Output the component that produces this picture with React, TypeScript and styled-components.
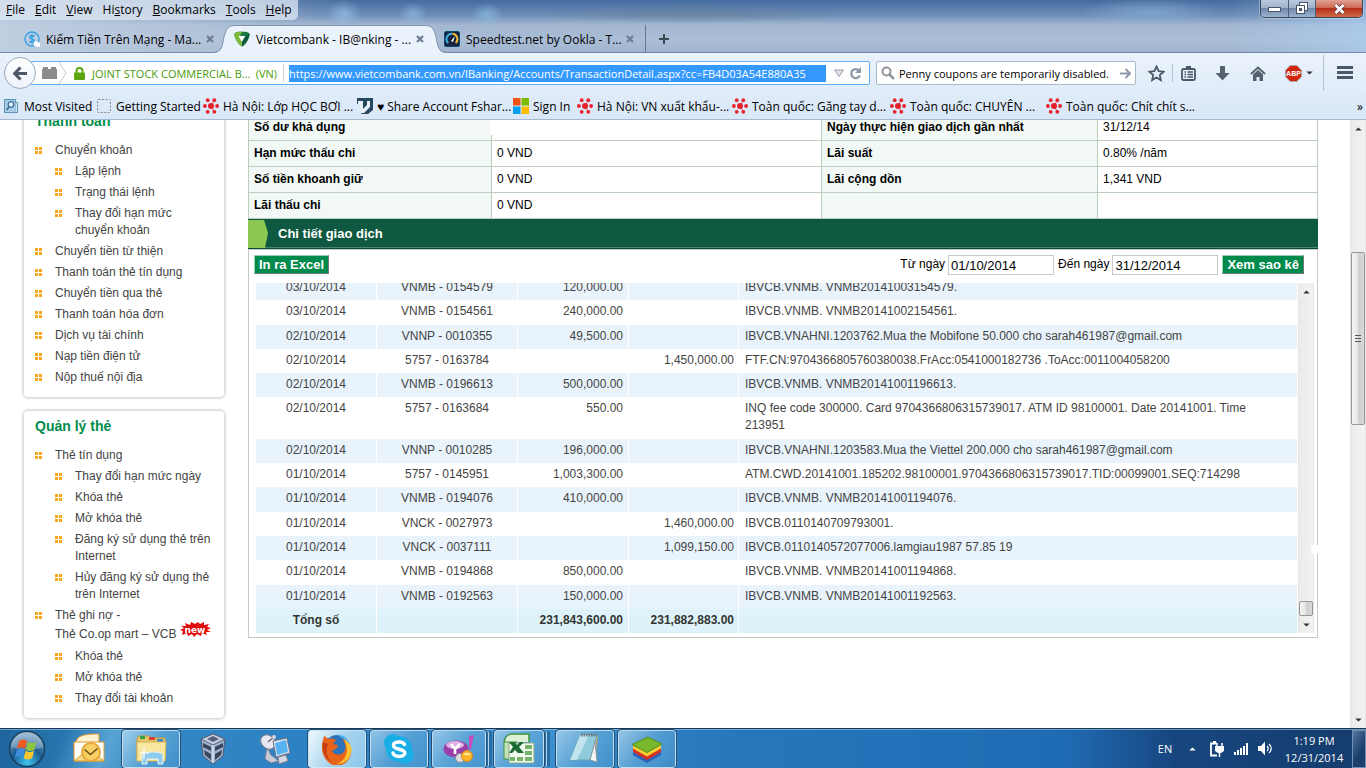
import React from "react";
import styled, { createGlobalStyle, css } from "styled-components";

const UI_FONT = '"Open Sans", "Noto Sans", sans-serif';
const PAGE_FONT = '"Liberation Sans", Arial, sans-serif';

const GlobalStyle = createGlobalStyle`
  * { box-sizing: border-box; }
  html, body { margin: 0; height: 100%; overflow: hidden; }
  body { font-family: ${PAGE_FONT}; font-size: 12px; background: #fff; }
  button, input { font: inherit; margin: 0; padding: 0; border: 0; background: none; color: inherit; }
  button { display: flex; align-items: center; justify-content: center; }
  a { color: inherit; text-decoration: none; }
  ul { list-style: none; margin: 0; padding: 0; }
  svg { display: block; flex: none; }
`;

/* ---------- Window ---------- */

const Desktop = styled.div`
  display: flex;
  flex-direction: column;
  height: 100vh;
`;

const BrowserChrome = styled.header`
  flex: none;
  font-family: ${UI_FONT};
  font-size: 12px;
  color: #000;
`;

const TitleArea = styled.div`
  height: 53px;
  display: flex;
  flex-direction: column;
  border-bottom: 1px solid #7288a8;
  background:
    radial-gradient(ellipse 18px 14px at 344px 14px, rgba(150, 195, 235, 0.7), transparent),
    radial-gradient(ellipse 14px 12px at 413px 14px, rgba(150, 195, 235, 0.6), transparent),
    radial-gradient(ellipse 16px 12px at 487px 15px, rgba(140, 190, 225, 0.7), transparent),
    radial-gradient(ellipse 160px 9px at 690px 14px, rgba(105, 125, 150, 0.6), transparent),
    radial-gradient(ellipse 70px 14px at 1150px 12px, rgba(140, 180, 220, 0.6), transparent),
    linear-gradient(90deg, rgba(195, 208, 226, 0.9), transparent 26%, transparent 90%, rgba(175, 210, 245, 0.6)),
    linear-gradient(#446c9f, #6d8db7 15px, #a3b7d1 25px, #a9bdd6 40px, #a0b4ce);
`;

const TitleRow = styled.div`
  display: flex;
  justify-content: space-between;
  align-items: flex-start;
  height: 25px;
`;

const MenuBar = styled.nav`
  display: flex;
  height: 20px;
  align-items: center;
  padding: 0 6px;
  gap: 10px;
  border-radius: 0 0 5px 0;
  background: rgba(222, 231, 243, 0.75);
`;

const MenuEntry = styled.button`
  line-height: 18px;
  u { text-underline-offset: 1px; }
`;

const WindowControls = styled.div`
  display: flex;
  height: 18px;
  margin-right: 3px;
  border: 1px solid #35465e;
  border-top: 0;
  border-radius: 0 0 5px 5px;
  overflow: hidden;
  box-shadow: 0 0 0 1px rgba(255, 255, 255, 0.3);
`;

const ControlButton = styled.button<{ $close?: boolean }>`
  width: ${(p) => (p.$close ? 47 : 27)}px;
  border-left: ${(p) => (p.$close ? "1px solid #5c2a2a" : "0")};
  background: ${(p) =>
    p.$close
      ? "linear-gradient(#e0a294, #cf6a53 45%, #b5301a 50%, #d06a45)"
      : "linear-gradient(#b9c8dc, #a0b3cc 45%, #7089ab 50%, #9db4d0)"};
  & + & { border-left: 1px solid #4a5d78; }
`;

const TabStrip = styled.div`
  display: flex;
  height: 27px;
  padding-left: 15px;
`;

const Tab = styled.div`
  position: relative;
  display: flex;
  align-items: center;
  width: 210px;
  height: 28px;
  padding: 0 10px 0 9px;
  gap: 6px;
`;

const TabShape = styled.svg`
  position: absolute;
  left: -13px;
  top: 0;
  width: 236px;
  height: 28px;
`;

const TabTitle = styled.button`
  position: relative;
  flex: 1;
  min-width: 0;
  justify-content: flex-start;
  white-space: nowrap;
`;

const TabIcon = styled.span`
  position: relative;
`;

const TabClose = styled.button`
  position: relative;
`;

const NewTab = styled.button`
  width: 36px;
  border-left: 1px solid #66778f;
`;

const NavBar = styled.div`
  display: flex;
  align-items: center;
  height: 40px;
  padding-left: 4px;
  background: linear-gradient(#eaf2fc, #e0ecf9);
  font-size: 11px;
`;

const BackButton = styled.button`
  position: relative;
  z-index: 1;
  flex: none;
  width: 32px;
  height: 32px;
  margin-right: -6px;
  border: 1px solid #9aa9bd;
  border-radius: 50%;
  background: linear-gradient(#fff, #edf3fa);
`;

const AddressBar = styled.div`
  display: flex;
  align-items: center;
  flex: 1;
  min-width: 0;
  height: 24px;
  padding: 0 7px 0 11px;
  border: 1px solid #5fb0f5;
  border-radius: 2px;
  background: #fff;
`;

const Identity = styled.div`
  display: flex;
  align-items: center;
  flex: none;
  width: 242px;
  height: 18px;
  margin-right: 5px;
  border-right: 1px solid #d0d0d0;
  color: #4a9a0a;
`;

const IdentityName = styled.span`
  flex: 1;
  padding-left: 7px;
  white-space: nowrap;
`;

const IdentityCountry = styled.span`
  padding-right: 6px;
`;

const LockSlot = styled.span`
  padding-left: 7px;
`;

const UrlInput = styled.input`
  flex: 1;
  min-width: 0;
  height: 17px;
  background: #3399ff;
  color: #fff;
`;

const AddressActions = styled.div`
  display: flex;
  flex: none;
  align-items: center;
  gap: 5px;
  padding-left: 8px;
`;

const SearchBox = styled.form`
  display: flex;
  align-items: center;
  flex: none;
  width: 260px;
  height: 24px;
  margin: 0 5px 0 6px;
  padding: 0 4px;
  gap: 4px;
  border: 1px solid #a9b9cf;
  border-radius: 2px;
  background: #fff;
  input { flex: 1; min-width: 0; }
`;

const ToolButton = styled.button<{ $width: number; $divider?: "left" | "right" }>`
  flex: none;
  width: ${(p) => p.$width}px;
  height: ${(p) => (p.$divider === "left" ? 36 : 18)}px;
  gap: 4px;
  ${(p) => p.$divider && css`border-${p.$divider}: 1px solid #b4c1d3;`}
`;

const BookmarkBar = styled.nav`
  display: flex;
  align-items: center;
  height: 27px;
  padding: 0 3px 0 4px;
  border-bottom: 1px solid #a5b8d2;
  background: linear-gradient(#dfebf8, #d9e7f7);
`;

const Bookmark = styled.a<{ $width: number }>`
  display: flex;
  align-items: center;
  flex: none;
  width: ${(p) => p.$width}px;
  gap: 4px;
  white-space: nowrap;
`;

const Overflow = styled.button`
  margin-left: auto;
`;

/* ---------- Page ---------- */

const Viewport = styled.div`
  display: flex;
  flex: 1;
  min-height: 0;
  background: #fff;
`;

const Page = styled.div`
  display: flex;
  align-items: flex-start;
  flex: 1;
  min-width: 0;
  gap: 23px;
  padding: 0 32px 0 23px;
  overflow: hidden;
`;

const Sidebar = styled.aside`
  display: flex;
  flex-direction: column;
  flex: none;
  width: 202px;
  gap: 12px;
  margin-top: -15px;
`;

const Card = styled.section`
  padding: 5px 11px 11px;
  border: 1px solid #dcdcdc;
  border-radius: 5px;
  box-shadow: 0 0 3px #c4c4c4;
`;

const CardTitle = styled.h2`
  margin: 0 0 11px;
  color: #018c4c;
  font-size: 14px;
  line-height: 20px;
`;

const MenuList = styled.ul`
  display: flex;
  flex-direction: column;
  gap: 4px;
  color: #444;
  line-height: 17px;
`;

const MenuItem = styled.li<{ $nested?: boolean }>`
  display: flex;
  align-items: flex-start;
  gap: 13px;
  margin-left: ${(p) => (p.$nested ? 20 : 0)}px;
  white-space: pre-line;
  svg { margin-top: 5px; }
`;

const NewLine = styled.span`
  display: flex;
  align-items: center;
  gap: 4px;
  height: 20px;
  white-space: nowrap;
  && svg { margin: -8px 0 0; }
`;

const Main = styled.main`
  flex: 1;
  min-width: 0;
  margin-top: -6px;
`;

const InfoTable = styled.table`
  width: 100%;
  border-collapse: collapse;
  table-layout: fixed;
  color: #000;
  th, td {
    position: relative;
    height: 26px;
    padding: 0 5px;
    border: 1px solid #bccfbf;
    text-align: left;
    line-height: 17px;
  }
  th { background: #f2f8f6; }
`;

const Blank = styled.span`
  position: absolute;
  left: -2px;
  top: 4px;
  width: 16px;
  height: 16px;
  background: #fff;
`;

const Banner = styled.h2`
  display: flex;
  align-items: center;
  gap: 9px;
  height: 30px;
  margin: 0;
  border-bottom: 1px solid #0b4a35;
  background: #0f5841;
  box-shadow: inset 0 -1px #4d8573;
  color: #fff;
  font-size: 13px;
`;

const StatementBox = styled.section`
  position: relative;
  padding: 5px 3px 4px 5px;
  border: 1px solid #c8c8c8;
`;

const FilterBar = styled.form`
  display: flex;
  align-items: flex-start;
  gap: 4px;
  height: 28px;
  padding-right: 10px;
  color: #000;
  label { display: flex; gap: 3px; line-height: 19px; }
  label:first-of-type { margin-left: auto; }
`;

const GreenButton = styled.button`
  height: 19px;
  padding: 0 4px;
  border: 1px solid #9ccbb3;
  border-right-color: #777;
  border-bottom-color: #777;
  background: #008a4b;
  color: #fff;
  font-size: 13px;
  font-weight: bold;
`;

const DateInput = styled.input`
  width: 106px;
  height: 20px;
  padding: 1px 2px 0;
  border: 1px solid #c8c8c8;
  font-size: 13px;
`;

const Scroller = styled.div`
  display: flex;
  padding-left: 2px;
`;

const ScrollBody = styled.div`
  display: flex;
  align-items: flex-end;
  flex: 1;
  height: 350px;
  overflow: hidden;
`;

const Ledger = styled.table`
  width: 100%;
  height: 357px;
  border-spacing: 0;
  table-layout: fixed;
  color: #444;
  line-height: 17px;
  td {
    padding: 3px 5px 4px;
    border-right: 1px solid #fff;
    text-align: center;
    vertical-align: top;
  }
  td:nth-child(3), td:nth-child(4) { text-align: right; }
  td:nth-child(4) { padding-right: 4px; }
  td:nth-child(5) { padding: 3px 30px 4px 6px; text-align: left; }
  tbody tr:nth-child(odd) { background: #e8f3fc; }
  tfoot { background: #def3f9; font-weight: bold; color: #333; }
`;

const Notch = styled.span`
  position: absolute;
  right: -1px;
  top: 295px;
  width: 7px;
  height: 9px;
  background: #fff;
`;

const ScrollTrack = styled.div`
  display: flex;
  flex-direction: column;
  flex: none;
  width: 16px;
  border: solid #e6e6e6;
  border-width: 0 1px;
  background: linear-gradient(90deg, #ebebeb, #f2f2f2);
`;

const ScrollArrow = styled.button`
  width: 100%;
  height: 17px;
`;

const ScrollGap = styled.div<{ $grow: number }>`
  flex: ${(p) => p.$grow};
`;

const ScrollThumb = styled.div<{ $length: number }>`
  display: flex;
  align-items: center;
  justify-content: center;
  flex: none;
  height: ${(p) => p.$length}px;
  border: 1px solid #979797;
  border-radius: 2px;
  background: linear-gradient(90deg, #f5f5f5, #e6e6e6 45%, #cfcfd2 55%, #d9d9dc);
`;

/* ---------- Taskbar ---------- */

const TaskBar = styled.footer`
  display: flex;
  align-items: center;
  flex: none;
  height: 40px;
  border-top: 1px solid #1c3a56;
  box-shadow: inset 0 1px rgba(160, 205, 235, 0.6);
  background:
    linear-gradient(115deg, transparent 60px, rgba(140, 205, 240, 0.45) 105px, transparent 150px),
    linear-gradient(90deg, #1d659d, #3488c4 10%, #2a80c3 25%, #3f93cf 38%, #2878bd 52%, #1f6bb3 78%, #17467f 86%, #153c6c);
  color: #fff;
  font-family: ${UI_FONT};
  font-size: 11px;
`;

const StartButton = styled.button`
  width: 54px;
  margin-right: 6px;
`;

const TaskButtons = styled.div`
  display: flex;
  flex: 1;
  gap: 4px;
`;

const TaskButton = styled.button<{ $mode?: "open" | "active"; $stack?: number }>`
  width: ${(p) => 58 - (p.$stack ?? 0) * 4}px;
  margin-right: ${(p) => (p.$stack ?? 0) * 4}px;
  height: 38px;
  border-radius: 3px;
  ${(p) =>
    p.$mode &&
    css`
      border: 1px solid rgba(205, 232, 250, 0.85);
      outline: 1px solid #225078;
      outline-offset: 0;
      background: ${p.$mode === "active"
        ? "linear-gradient(120deg, #f0f8fd, #a9d4ee 50%, #8cc7ea)"
        : "linear-gradient(130deg, rgba(190,222,242,.7), rgba(120,185,225,.5) 50%, rgba(90,160,210,.4))"};
    `}
  ${(p) => p.$stack && css`box-shadow: 3px 0 0 -1px #2a6da3, 4px 0 0 -1px #b5d8ee, 7px 0 0 -1px #2a6da3;`}
`;

const Tray = styled.div`
  display: flex;
  align-items: center;
  flex: none;
`;

const TrayButton = styled.button<{ $width: number }>`
  width: ${(p) => p.$width}px;
`;

const Clock = styled.time`
  width: 76px;
  text-align: center;
  line-height: 17px;
`;

const ShowDesktop = styled.button`
  width: 14px;
  height: 38px;
  border: 1px solid #6f8fb4;
  background: linear-gradient(120deg, #53779f, #1a3f6b 60%);
`;

/* ---------- Icons ---------- */

const Bullet = () => (
  <svg width="7" height="7" fill="#f9a51b" shapeRendering="crispEdges">
    <path d="M0 0h3v3H0zM4 0h3v3H4zM0 4h3v3H0zM4 4h3v3H4z" />
  </svg>
);

const NewBadge = () => (
  <svg width="31" height="16" viewBox="0 0 31 16">
    <path
      fill="#e00b0b"
      d="M0 8l4-2-3-2 5 0-1-3 5 2 1-3 4 2 3-2 2 2 4-2 0 3 5-1-2 3 4 1-4 2 4 2-5 0 1 3-5-2-1 3-4-2-3 3-2-3-4 2-1-3-5 2 1-4z"
    />
    <text x="15" y="11" fill="#fff" fontSize="9" fontWeight="bold" fontFamily="DejaVu Sans" textAnchor="middle">new</text>
  </svg>
);

const CloseX = () => (
  <svg width="10" height="10" viewBox="0 0 10 10">
    <path d="M2 2l6 6M8 2L2 8" stroke="#6d7b8e" strokeWidth="2.200" />
  </svg>
);

const CoinIcon = () => (
  <svg width="16" height="16" viewBox="0 0 16 16">
    <circle cx="8" cy="8" r="7" fill="none" stroke="#35a3e6" strokeWidth="1.400" />
    <path d="M10.500 5.500C10 4.300 5.800 4 5.800 6.300S10.600 7.800 10.400 9.800 6 11.500 5.400 10M8 3v10" fill="none" stroke="#35a3e6" strokeWidth="1.500" />
    <path d="M10 15v-4l2-1 4 2v4z" fill="#fff" />
  </svg>
);

const BankIcon = () => (
  <svg width="16" height="16" viewBox="0 0 16 16">
    <path d="M8 15.500C4 13 1 8 .3 3.500 1 1 3 .8 8 .8s7 .2 7.700 2.700C15 8 12 13 8 15.500z" fill="#1d7a45" />
    <path d="M.3 3.500C1 1 3 .8 8 .8L6 5l3 6-1 4.500C4 13 1 8 .3 3.500z" fill="#7dbb3c" />
    <path d="M4.500 5h7L8 11z" fill="#fff" />
    <path d="M11.500 5l4-2C15 8 12 13 8 15.500V11z" fill="#0d5b3c" />
  </svg>
);

const SpeedIcon = () => (
  <svg width="16" height="16" viewBox="0 0 16 16">
    <rect x=".5" y=".5" width="15" height="15" rx="1.500" fill="#16243f" stroke="#0a4b73" />
    <path d="M4.300 12A5.300 5.300 0 0 1 8.500 2.800" fill="none" stroke="#37b6e9" strokeWidth="1.900" />
    <path d="M8.500 2.800A5.300 5.300 0 0 1 11.700 12" fill="none" stroke="#f3bd35" strokeWidth="1.900" />
    <path d="M7 10l4-5-2 6z" fill="#fff" />
  </svg>
);

const PlusIcon = () => (
  <svg width="10" height="10"><path d="M5 0v10M0 5h10" stroke="#3d4856" strokeWidth="2" /></svg>
);

const BackArrow = () => (
  <svg width="15" height="15" viewBox="0 0 15 15">
    <path d="M7.500 1.500l-6 6 6 6M2 7.500h12" fill="none" stroke="#4d5866" strokeWidth="3" />
  </svg>
);

const BricksIcon = () => (
  <svg width="15" height="12" fill="#8b8b8b"><path d="M1 0h5v2H1zM9 0h5v2H9zM0 2h15v10H0z" /></svg>
);

const ChevronEdge = () => (
  <svg width="10" height="22" viewBox="0 0 10 22"><path d="M2 0l7 11-7 11" fill="none" stroke="#c3cad3" /></svg>
);

const LockIcon = () => (
  <svg width="11" height="13" viewBox="0 0 11 13">
    <rect y="5.500" width="11" height="7.500" rx="1" fill="#5ba711" />
    <path d="M2.500 6V4a3 3 0 0 1 6 0v2" fill="none" stroke="#5ba711" strokeWidth="2" />
  </svg>
);

const DropIcon = () => (
  <svg width="10" height="8" viewBox="0 0 10 8"><path d="M.5 1h9L5 7.500z" fill="#dfe3ea" stroke="#97a2b1" /></svg>
);

const ReloadIcon = () => (
  <svg width="13" height="13" viewBox="0 0 13 13">
    <path d="M10 3.500A4.500 4.500 0 1 0 10.800 8.500" fill="none" stroke="#8d99a8" strokeWidth="2.200" />
    <path d="M12 0v6H6z" fill="#8d99a8" />
  </svg>
);

const SearchIcon = () => (
  <svg width="14" height="14" viewBox="0 0 14 14">
    <circle cx="5.500" cy="5.500" r="4" fill="none" stroke="#8f959d" strokeWidth="2" />
    <path d="M8.500 8.500l4.500 4.500" stroke="#8f959d" strokeWidth="2.500" />
  </svg>
);

const GoIcon = () => (
  <svg width="11" height="11" viewBox="0 0 11 11">
    <path d="M0 5.500h9M5.500 1l4.500 4.500L5.500 10" fill="none" stroke="#8d99a8" strokeWidth="2" />
  </svg>
);

const StarIcon = () => (
  <svg width="17" height="17" viewBox="0 0 17 17">
    <path d="M8.500 1.500l2.100 4.700 5 .5-3.800 3.400 1.100 5-4.400-2.600-4.400 2.600 1.100-5L1.400 6.700l5-.5z" fill="none" stroke="#4d5866" strokeWidth="1.800" />
  </svg>
);

const ClipIcon = () => (
  <svg width="15" height="15" viewBox="0 0 15 15">
    <rect x="1" y="3" width="13" height="11" rx="1.500" fill="none" stroke="#4d5866" strokeWidth="1.800" />
    <path d="M5 0h5v3H5z" fill="#4d5866" />
    <path d="M3.500 6h1.500M6.500 6h5.500M3.500 8.500h1.500M6.500 8.500h5.500M3.500 11h1.500M6.500 11h5.500" stroke="#4d5866" strokeWidth="1.300" />
  </svg>
);

const DownIcon = () => (
  <svg width="15" height="15" fill="#56616f"><path d="M5 0h5v7h4.500l-7 7.500L.5 7H5z" /></svg>
);

const HomeIcon = () => (
  <svg width="16" height="15" viewBox="0 0 16 15">
    <path d="M1 8l7-6.500L15 8" fill="none" stroke="#56616f" strokeWidth="2" />
    <path d="M3 8.500l5-4.500 5 4.500V15H9.500v-4h-3v4H3z" fill="#56616f" />
  </svg>
);

const AbpIcon = () => (
  <svg width="17" height="17" viewBox="0 0 17 17">
    <path d="M5.200.5h6.600l4.700 4.700v6.600l-4.700 4.700H5.200L.5 11.800V5.200z" fill="#d0240f" stroke="#a7a7a7" />
    <text x="8.500" y="11" fill="#fff" fontSize="7" fontWeight="bold" fontFamily="Liberation Sans" textAnchor="middle">ABP</text>
  </svg>
);

const Caret = ({ color = "#333", up = false }: { color?: string; up?: boolean }) => (
  <svg width="7" height="4" viewBox="0 0 8 5"><path d={up ? "M0 4.500h8L4 .5z" : "M0 .5h8L4 4.500z"} fill={color} /></svg>
);

const MenuIcon = () => (
  <svg width="16" height="14" fill="#4d5866"><path d="M0 0h16v3H0zM0 5h16v3H0zM0 10h16v3H0z" /></svg>
);

const VisitedIcon = () => (
  <svg width="16" height="16" viewBox="0 0 16 16">
    <path d="M.5 1.500h11v13H.5z" fill="#a9cfe8" stroke="#5b94b8" />
    <path d="M11.500 4.500h2v10h-2" fill="#d3e8f5" stroke="#5b94b8" />
    <circle cx="7" cy="6.500" r="2.800" fill="#dff0fa" stroke="#3d6f96" strokeWidth="1.300" />
    <path d="M5 9l-2.500 3" stroke="#3d6f96" strokeWidth="1.800" />
  </svg>
);

const DashedIcon = () => (
  <svg width="16" height="16"><rect x="1.500" y="1.500" width="13" height="13" rx="1" fill="none" stroke="#8a8a8a" strokeDasharray="2 1.500" /></svg>
);

const MolIcon = () => (
  <svg width="16" height="16" viewBox="0 0 16 16" fill="#e8212b">
    <circle cx="8" cy="8" r="3" />
    <circle cx="4.700" cy="2.200" r="1.900" /><circle cx="11.300" cy="2.200" r="1.900" />
    <circle cx="1.900" cy="8" r="1.900" /><circle cx="14.100" cy="8" r="1.900" />
    <circle cx="4.700" cy="13.800" r="1.900" /><circle cx="11.300" cy="13.800" r="1.900" />
    <path d="M11 3L8 8M8 8l3 5" fill="none" stroke="#e8212b" strokeWidth=".8" />
  </svg>
);

const ShareVIcon = () => (
  <svg width="16" height="16" viewBox="0 0 16 16">
    <path d="M0 0h16v12l-5 4H4l2-3L0 6z" fill="#27485f" />
    <path d="M1 3h5v8l4-4V3h3v6l-6 6H3V6H1z" fill="#e8f1fa" />
    <path d="M0 6h3v10H0z" fill="#dce9f7" />
  </svg>
);

const MsIcon = () => (
  <svg width="16" height="16">
    <path d="M0 0h7.500v7.500H0z" fill="#f65314" /><path d="M8.500 0H16v7.500H8.500z" fill="#7cbb00" />
    <path d="M0 8.500h7.500V16H0z" fill="#00a1f1" /><path d="M8.500 8.500H16V16H8.500z" fill="#ffbb00" />
  </svg>
);

const MinIcon = () => (
  <svg width="13" height="6"><rect x=".5" y="1.500" width="12" height="4" fill="#fff" stroke="#4a566a" /></svg>
);

const RestoreIcon = () => (
  <svg width="13" height="13" viewBox="0 0 13 13" shapeRendering="crispEdges">
    <path d="M3 0h9v9H3z" fill="#47546a" /><path d="M4 1h7v7H4z" fill="#fff" />
    <path d="M0 3h9v9H0z" fill="#47546a" /><path d="M1 4h7v7H1z" fill="#fff" /><path d="M3 6h3v3H3z" fill="#47546a" />
  </svg>
);

const WinCloseIcon = () => (
  <svg width="13" height="12" viewBox="0 0 13 12">
    <path d="M2.500 2l8 8M10.500 2l-8 8" stroke="#5a3440" strokeWidth="4.500" />
    <path d="M2.500 2l8 8M10.500 2l-8 8" stroke="#fff" strokeWidth="2.800" />
  </svg>
);

const OrbIcon = () => (
  <svg width="38" height="38" viewBox="0 0 38 38">
    <defs>
      <radialGradient id="orb" cx=".5" cy=".9" r=".9">
        <stop offset="0" stopColor="#3fc4ee" /><stop offset=".5" stopColor="#1a5c92" /><stop offset="1" stopColor="#8fb4cf" />
      </radialGradient>
    </defs>
    <circle cx="19" cy="19" r="17.500" fill="url(#orb)" stroke="#1b3f5f" strokeWidth="1.500" />
    <path d="M3 17a16 15 0 0 1 32 0c-9 4-23 4-32 0z" fill="#fff" opacity=".25" />
    <path d="M11 11c3-2 5-2 8 0l-2 8c-3-2-5-2-8 0z" fill="#ee5a24" />
    <path d="M20 11.500c3 2 5 2 8.500 0l-2 8c-3 2-5.500 2-8.500 0z" fill="#8cc63e" />
    <path d="M8.700 20c3-2 5-2 8 0l-2 7.500c-3-2-5-2-7.700 0z" fill="#3e8fdb" />
    <path d="M17.700 20.500c3 2 5.500 2 8.500 0l-2 7.500c-3 2-5.500 2-8.500 0z" fill="#fbc62f" />
  </svg>
);

const OutlookIcon = () => (
  <svg width="32" height="32" viewBox="0 0 32 32">
    <path d="M5 5c4-4 14-4 21-4v15H1V11z" fill="#fdf3d3" stroke="#e0982a" />
    <path d="M1 9h30v19H1z" fill="#fff" stroke="#dd9a2d" />
    <path d="M1 28l12-10h6l12 10z" fill="#f7d88b" stroke="#dd9a2d" />
    <circle cx="18" cy="19" r="9" fill="#f8cf63" stroke="#e8a83a" strokeWidth="2" />
    <path d="M11.500 16.500l6 5 7-6" fill="none" stroke="#6d4f1c" strokeWidth="1.600" />
  </svg>
);

const ExplorerIcon = () => (
  <svg width="32" height="32" viewBox="0 0 32 32">
    <path d="M2 5l2-2h10l2 2h14v22H2z" fill="#e4c46a" stroke="#c49b3b" />
    <path d="M5 3h5v3H5z" fill="#35a248" /><path d="M14 4h6v3h-6z" fill="#d9432e" /><path d="M22 6h6v3h-6z" fill="#3f86cf" />
    <path d="M2 9h29l-1 19H2z" fill="#f8e7a0" stroke="#d8b553" />
    <path d="M7 31v-9c0-4 21-4 21 0v9h-5v-5H12v5z" fill="#8ecbed" stroke="#e6f6ff" />
    <path d="M9 14v12M5 20h9" stroke="#fff" strokeWidth="1.200" />
  </svg>
);

const BoxIcon = () => (
  <svg width="28" height="32" viewBox="0 0 28 32">
    <path d="M14 1l12 5-2 17-10 8L4 23 2 6z" fill="#9fb0ca" stroke="#4c5a75" />
    <path d="M14 1l12 5-12 6L2 6z" fill="#c5cfdf" stroke="#55637e" />
    <path d="M8 6l6-3 6 3-6 3z" fill="#55617a" />
    <path d="M4 10l8 4v4l-8-4zM5 17l7 4v6l-6-5zM24 10l-8 4v4l8-4zM23 17l-7 4v6l6-5z" fill="#3a455c" />
    <path d="M14 12v18" stroke="#dde4ee" strokeWidth="1.500" />
  </svg>
);

const RemoteIcon = () => (
  <svg width="32" height="32" viewBox="0 0 32 32">
    <path d="M8 14l4 8 8 6-8 2-6-4z" fill="#c9ccd8" stroke="#777d91" />
    <ellipse cx="9" cy="9" rx="8" ry="6.500" transform="rotate(40 9 9)" fill="#e7e8ef" stroke="#757b90" />
    <path d="M9 9l6-5" stroke="#666" strokeWidth="1.500" /><circle cx="15" cy="4" r="2" fill="#d4d6de" />
    <path d="M14 8l14-3 3 15-14 4z" fill="#e4e6ee" stroke="#6d7489" />
    <path d="M16 10l11-3 2 12-11 3z" fill="#55b3f2" />
    <path d="M19 24l8-2 2 6-9 3z" fill="#d5d7e1" stroke="#777d91" />
  </svg>
);

const FirefoxIcon = () => (
  <svg width="32" height="32" viewBox="0 0 32 32">
    <circle cx="16" cy="15" r="13" fill="#2a74bc" />
    <path d="M16 2c6-1 12 4 12 10-3-5-6-7-12-10z" fill="#54b3e8" />
    <path d="M2 7l1-4 5 3c4-1 6 0 7 2l-3 2c1 1 2 2 5 2l-1 3-5 3c2 4 8 5 12 1 3-4 1-10-2-13 7 3 10 9 9 15-2 8-8 12-15 12C5 31-2 20 2 7z" fill="#e8641b" />
    <path d="M23 6c6 4 9 9 7 14-2 8-8 11-14 11 9-4 13-12 7-25z" fill="#fbc232" />
    <path d="M2 9c-1 9 2 16 8 20-6-8-5-13-3-18z" fill="#c43c14" />
  </svg>
);

const SkypeIcon = () => (
  <svg width="32" height="32" viewBox="0 0 32 32">
    <circle cx="10" cy="10" r="9" fill="#19aee6" /><circle cx="22" cy="22" r="9" fill="#19aee6" /><circle cx="16" cy="16" r="13" fill="#19aee6" />
    <path d="M21.500 11.500C20 8 10.500 8 10.500 12.500S21.800 15.500 21.800 20 11.500 24.500 10 20" fill="none" stroke="#fff" strokeWidth="3.500" strokeLinecap="round" />
  </svg>
);

const YahooIcon = () => (
  <svg width="32" height="30" viewBox="0 0 32 30">
    <ellipse cx="13" cy="15" rx="12.500" ry="8.500" fill="#9a3fa8" /><ellipse cx="12" cy="11" rx="9" ry="4" fill="#dfb2e3" />
    <path d="M8 10l4 5 5-5M12 15v5" fill="none" stroke="#fff" strokeWidth="2.600" />
    <path d="M26 2l5-1-3 14h-2z" fill="#c44dbb" />
    <circle cx="17" cy="24" r="4.500" fill="#ddd" stroke="#888" /><circle cx="24" cy="22" r="5.500" fill="#fbb52c" stroke="#e08a13" /><path d="M20 21c2-3 6-3 8 0z" fill="#fde99c" />
  </svg>
);

const ExcelIcon = () => (
  <svg width="32" height="32" viewBox="0 0 32 32">
    <path d="M1 9c1-5 4-8 8-8h17v8" fill="#dff0d5" stroke="#3f9440" strokeWidth="1.500" />
    <path d="M1 9v17h13V9z" fill="#c4e3b5" stroke="#3f9440" />
    <path d="M6 10h25v20H6z" fill="#f2f9ee" stroke="#8aa587" />
    <path d="M22 12h7v4h-7zM22 18h7v4h-7zM22 24h7v4h-7zM14 24h6v4h-6zM7 24h5v4H7z" fill="#74b46b" />
    <path d="M6 9h6l2 3 3-3h4l-5 5 5 6h-6l-3-3-3 3H6l4-6z" fill="#1c6b33" />
  </svg>
);

const NotepadIcon = () => (
  <svg width="32" height="32" viewBox="0 0 32 32">
    <path d="M12 3h17l-3 26-4-2z" fill="#c4a96a" />
    <path d="M11 2h17l-7 25H1z" fill="#8fcbdc" stroke="#64a4b8" />
    <path d="M11 2h9L8 27H1z" fill="#d5f0f6" opacity=".7" />
    <path d="M21 27l5-18 2 20z" fill="#f4f6f7" stroke="#8a9aa0" />
    <path d="M12 2h16" stroke="#75797d" strokeWidth="3" strokeDasharray="1.500 1" />
  </svg>
);

const StacksIcon = () => (
  <svg width="32" height="28" viewBox="0 0 32 28">
    <path d="M2 17l14 7 14-7v3l-14 8-14-8z" fill="#2b62b8" />
    <path d="M2 13l14 7 14-7v4l-14 8-14-8z" fill="#d93025" />
    <path d="M2 10l14 7 14-7v3.500l-14 8-14-8z" fill="#f7cf31" />
    <path d="M1 9.500L17 2l14 7-15 8.500z" fill="#79b82a" stroke="#4e8e1c" />
  </svg>
);

const PlugIcon = () => (
  <svg width="15" height="16" viewBox="0 0 15 16" fill="none" stroke="#fff">
    <path d="M8 14.500H2v-12h6" strokeWidth="1.800" /><path d="M4 0h3v2H4z" fill="#fff" stroke="none" />
    <path d="M6 5h9v5l-3 2H9l-3-2z" fill="#fff" stroke="none" /><path d="M8 2v3M13 2v3M10.500 12v4" strokeWidth="1.500" />
  </svg>
);

const SignalIcon = () => (
  <svg width="15" height="12" fill="#fff"><path d="M0 9h2v3H0zM3 7h2v5H3zM6 5h2v7H6zM9 3h2v9H9zM12 0h2v12h-2z" /></svg>
);

const SpeakerIcon = () => (
  <svg width="15" height="15" viewBox="0 0 15 15" fill="none" stroke="#fff">
    <path d="M0 5h3l4-4.500v14L3 10H0z" fill="#fff" stroke="none" /><path d="M9 5c1.500 1.500 1.500 3.500 0 5M11 3c3 3 3 6 0 9" strokeWidth="1.200" />
  </svg>
);

const GripIcon = () => (
  <svg width="6" height="8" stroke="#555"><path d="M0 .5h6M0 3.500h6M0 6.500h6" /></svg>
);

/* ---------- Data ---------- */

const menus = [["", "F", "ile"], ["", "E", "dit"], ["", "V", "iew"], ["Hi", "s", "tory"], ["", "B", "ookmarks"], ["", "T", "ools"], ["", "H", "elp"]];

const bookmarks: { icon: React.ReactNode; label: string; width: number }[] = [
  { icon: <VisitedIcon />, label: "Most Visited", width: 92 },
  { icon: <DashedIcon />, label: "Getting Started", width: 107 },
  { icon: <MolIcon />, label: "Hà Nội: Lớp HỌC BƠI ...", width: 154 },
  { icon: <ShareVIcon />, label: "♥ Share Account Fshar...", width: 156 },
  { icon: <MsIcon />, label: "Sign In", width: 64 },
  { icon: <MolIcon />, label: "Hà Nội: VN xuất khẩu-...", width: 155 },
  { icon: <MolIcon />, label: "Toàn quốc: Găng tay d...", width: 158 },
  { icon: <MolIcon />, label: "Toàn quốc: CHUYÊN ...", width: 156 },
  { icon: <MolIcon />, label: "Toàn quốc: Chít chít s...", width: 150 },
];

type Entry = { label: string; nested?: boolean; extra?: string };

const payments: Entry[] = [
  { label: "Chuyển khoản" },
  { label: "Lập lệnh", nested: true },
  { label: "Trạng thái lệnh", nested: true },
  { label: "Thay đổi hạn mức\nchuyển khoản", nested: true },
  { label: "Chuyển tiền từ thiện" },
  { label: "Thanh toán thẻ tín dụng" },
  { label: "Chuyển tiền qua thẻ" },
  { label: "Thanh toán hóa đơn" },
  { label: "Dịch vụ tài chính" },
  { label: "Nạp tiền điện tử" },
  { label: "Nộp thuế nội địa" },
];

const cards: Entry[] = [
  { label: "Thẻ tín dụng" },
  { label: "Thay đổi hạn mức ngày", nested: true },
  { label: "Khóa thẻ", nested: true },
  { label: "Mở khóa thẻ", nested: true },
  { label: "Đăng ký sử dụng thẻ trên\nInternet", nested: true },
  { label: "Hủy đăng ký sử dụng thẻ\ntrên Internet", nested: true },
  { label: "Thẻ ghi nợ -", extra: "Thẻ Co.op mart – VCB" },
  { label: "Khóa thẻ", nested: true },
  { label: "Mở khóa thẻ", nested: true },
  { label: "Thay đổi tài khoản", nested: true },
];

const info = [
  ["Số dư khả dụng", "", "Ngày thực hiện giao dịch gần nhất", "31/12/14"],
  ["Hạn mức thấu chi", "0 VND", "Lãi suất", "0.80% /năm"],
  ["Số tiền khoanh giữ", "0 VND", "Lãi cộng dồn", "1,341 VND"],
  ["Lãi thấu chi", "0 VND", "", ""],
];

const rows = [
  ["03/10/2014", "VNMB - 0154579", "120,000.00", "", "IBVCB.VNMB. VNMB20141003154579."],
  ["03/10/2014", "VNMB - 0154561", "240,000.00", "", "IBVCB.VNMB. VNMB20141002154561."],
  ["02/10/2014", "VNNP - 0010355", "49,500.00", "", "IBVCB.VNAHNI.1203762.Mua the Mobifone 50.000 cho sarah461987@gmail.com"],
  ["02/10/2014", "5757 - 0163784", "", "1,450,000.00", "FTF.CN:9704366805760380038.FrAcc:0541000182736 .ToAcc:0011004058200"],
  ["02/10/2014", "VNMB - 0196613", "500,000.00", "", "IBVCB.VNMB. VNMB20141001196613."],
  ["02/10/2014", "5757 - 0163684", "550.00", "", "INQ fee code 300000. Card 9704366806315739017. ATM ID 98100001. Date 20141001. Time 213951"],
  ["02/10/2014", "VNNP - 0010285", "196,000.00", "", "IBVCB.VNAHNI.1203583.Mua the Viettel 200.000 cho sarah461987@gmail.com"],
  ["01/10/2014", "5757 - 0145951", "1,003,300.00", "", "ATM.CWD.20141001.185202.98100001.9704366806315739017.TID:00099001.SEQ:714298"],
  ["01/10/2014", "VNMB - 0194076", "410,000.00", "", "IBVCB.VNMB. VNMB20141001194076."],
  ["01/10/2014", "VNCK - 0027973", "", "1,460,000.00", "IBVCB.0110140709793001."],
  ["01/10/2014", "VNCK - 0037111", "", "1,099,150.00", "IBVCB.0110140572077006.lamgiau1987 57.85 19"],
  ["01/10/2014", "VNMB - 0194868", "850,000.00", "", "IBVCB.VNMB. VNMB20141001194868."],
  ["01/10/2014", "VNMB - 0192563", "150,000.00", "", "IBVCB.VNMB. VNMB20141001192563."],
];

/* ---------- Parts ---------- */

const MenuCard = ({ title, entries }: { title: string; entries: Entry[] }) => (
  <Card>
    <CardTitle>{title}</CardTitle>
    <MenuList>
      {entries.map((e, i) => (
        <MenuItem key={i} $nested={e.nested}>
          <Bullet />
          <a href="#">
            {e.label}
            {e.extra && <NewLine>{e.extra}<NewBadge /></NewLine>}
          </a>
        </MenuItem>
      ))}
    </MenuList>
  </Card>
);

const ScrollBar = ({ before, length, after, grip }: { before: number; length: number; after: number; grip?: boolean }) => (
  <ScrollTrack>
    <ScrollArrow aria-label="Scroll up"><Caret up /></ScrollArrow>
    <ScrollGap $grow={before} />
    <ScrollThumb $length={length}>{grip && <GripIcon />}</ScrollThumb>
    <ScrollGap $grow={after} />
    <ScrollArrow aria-label="Scroll down"><Caret /></ScrollArrow>
  </ScrollTrack>
);

export default function App() {
  return (
    <Desktop>
      <GlobalStyle />
      <BrowserChrome>
        <TitleArea>
          <TitleRow>
            <MenuBar>
              {menus.map(([a, key, b]) => (
                <MenuEntry key={b}><span>{a}<u>{key}</u>{b}</span></MenuEntry>
              ))}
            </MenuBar>
            <WindowControls>
              <ControlButton aria-label="Minimize"><MinIcon /></ControlButton>
              <ControlButton aria-label="Restore"><RestoreIcon /></ControlButton>
              <ControlButton aria-label="Close" $close><WinCloseIcon /></ControlButton>
            </WindowControls>
          </TitleRow>
          <TabStrip>
            <Tab>
              <TabIcon><CoinIcon /></TabIcon>
              <TabTitle>Kiếm Tiền Trên Mạng - Ma...</TabTitle>
              <TabClose aria-label="Close tab"><CloseX /></TabClose>
            </Tab>
            <Tab>
              <TabShape viewBox="0 0 236 28">
                <path d="M0 28C11 28 10 20 12 12 14 4 16 .5 23 .5H213C220 .5 222 4 224 12 226 20 225 28 236 28z" fill="#eaf2fc" />
                <path d="M0 27.500C11 27.500 10 20 12 12 14 4 16 .5 23 .5H213C220 .5 222 4 224 12 226 20 225 27.500 236 27.500" fill="none" stroke="#8193ad" />
              </TabShape>
              <TabIcon><BankIcon /></TabIcon>
              <TabTitle>Vietcombank - IB@nking - ...</TabTitle>
              <TabClose aria-label="Close tab"><CloseX /></TabClose>
            </Tab>
            <Tab>
              <TabIcon><SpeedIcon /></TabIcon>
              <TabTitle>Speedtest.net by Ookla - T...</TabTitle>
              <TabClose aria-label="Close tab"><CloseX /></TabClose>
            </Tab>
            <NewTab aria-label="New tab"><PlusIcon /></NewTab>
          </TabStrip>
        </TitleArea>
        <NavBar>
          <BackButton aria-label="Back"><BackArrow /></BackButton>
          <AddressBar>
            <Identity>
              <BricksIcon />
              <ChevronEdge />
              <LockSlot><LockIcon /></LockSlot>
              <IdentityName>JOINT STOCK COMMERCIAL B...</IdentityName>
              <IdentityCountry>(VN)</IdentityCountry>
            </Identity>
            <UrlInput
              aria-label="Address"
              defaultValue="https://www.vietcombank.com.vn/IBanking/Accounts/TransactionDetail.aspx?cc=FB4D03A54E880A35"
            />
            <AddressActions>
              <button aria-label="History"><DropIcon /></button>
              <button aria-label="Reload"><ReloadIcon /></button>
            </AddressActions>
          </AddressBar>
          <SearchBox>
            <SearchIcon />
            <input aria-label="Search" defaultValue="Penny coupons are temporarily disabled." />
            <button type="button" aria-label="Go"><GoIcon /></button>
          </SearchBox>
          <ToolButton aria-label="Bookmark" $width={32} $divider="right"><StarIcon /></ToolButton>
          <ToolButton aria-label="Bookmarks list" $width={30}><ClipIcon /></ToolButton>
          <ToolButton aria-label="Downloads" $width={38}><DownIcon /></ToolButton>
          <ToolButton aria-label="Home" $width={34}><HomeIcon /></ToolButton>
          <ToolButton aria-label="Adblock Plus" $width={48}><AbpIcon /><Caret /></ToolButton>
          <ToolButton aria-label="Menu" $width={43} $divider="left"><MenuIcon /></ToolButton>
        </NavBar>
        <BookmarkBar>
          {bookmarks.map((b) => (
            <Bookmark key={b.label} href="#" $width={b.width}>{b.icon}{b.label}</Bookmark>
          ))}
          <Overflow>»</Overflow>
        </BookmarkBar>
      </BrowserChrome>

      <Viewport>
        <Page>
          <Sidebar>
            <MenuCard title="Thanh toán" entries={payments} />
            <MenuCard title="Quản lý thẻ" entries={cards} />
          </Sidebar>
          <Main>
            <InfoTable>
              <colgroup>
                <col style={{ width: 243 }} />
                <col />
                <col style={{ width: 276 }} />
                <col style={{ width: 220 }} />
              </colgroup>
              <tbody>
                {info.map((r, i) => (
                  <tr key={i}>
                    <th scope="row">{r[0]}</th>
                    <td>{r[1] || <Blank />}</td>
                    <th scope="row">{r[2]}</th>
                    <td>{r[3]}</td>
                  </tr>
                ))}
              </tbody>
            </InfoTable>
            <Banner>
              <svg width="21" height="28" viewBox="0 0 21 28"><path d="M0 0h16l4 13-3 15H0z" fill="#8dc850" /></svg>
              Chi tiết giao dịch
            </Banner>
            <StatementBox>
              <FilterBar>
                <GreenButton type="button">In ra Excel</GreenButton>
                <label>Từ ngày <DateInput defaultValue="01/10/2014" /></label>
                <label>Đến ngày <DateInput defaultValue="31/12/2014" /></label>
                <GreenButton type="button">Xem sao kê</GreenButton>
              </FilterBar>
              <Scroller>
                <ScrollBody>
                  <Ledger>
                    <colgroup>
                      <col style={{ width: 121 }} />
                      <col style={{ width: 141 }} />
                      <col style={{ width: 111 }} />
                      <col style={{ width: 110 }} />
                      <col />
                    </colgroup>
                    <tbody>
                      {rows.map((r, i) => (
                        <tr key={i}>
                          {r.map((c, j) => <td key={j}>{c}</td>)}
                        </tr>
                      ))}
                    </tbody>
                    <tfoot>
                      <tr>
                        <td>Tổng số</td><td /><td>231,843,600.00</td><td>231,882,883.00</td><td />
                      </tr>
                    </tfoot>
                  </Ledger>
                </ScrollBody>
                <ScrollBar before={1} length={15} after={0} />
              </Scroller>
              <Notch />
            </StatementBox>
          </Main>
        </Page>
        <ScrollBar before={115} length={173} after={286} grip />
      </Viewport>

      <TaskBar>
        <StartButton aria-label="Start"><OrbIcon /></StartButton>
        <TaskButtons>
          <TaskButton aria-label="Outlook"><OutlookIcon /></TaskButton>
          <TaskButton aria-label="Explorer" $mode="open"><ExplorerIcon /></TaskButton>
          <TaskButton aria-label="VirtualBox"><BoxIcon /></TaskButton>
          <TaskButton aria-label="Remote"><RemoteIcon /></TaskButton>
          <TaskButton aria-label="Firefox" $mode="active"><FirefoxIcon /></TaskButton>
          <TaskButton aria-label="Skype" $mode="open"><SkypeIcon /></TaskButton>
          <TaskButton aria-label="Yahoo" $mode="open" $stack={1}><YahooIcon /></TaskButton>
          <TaskButton aria-label="Excel" $mode="open" $stack={2}><ExcelIcon /></TaskButton>
          <TaskButton aria-label="Notepad" $mode="open"><NotepadIcon /></TaskButton>
          <TaskButton aria-label="BlueStacks" $mode="open"><StacksIcon /></TaskButton>
        </TaskButtons>
        <Tray>
          <TrayButton $width={30}>EN</TrayButton>
          <TrayButton $width={24} aria-label="Show hidden icons"><Caret up color="#fff" /></TrayButton>
          <TrayButton $width={24} aria-label="Power"><PlugIcon /></TrayButton>
          <TrayButton $width={26} aria-label="Network"><SignalIcon /></TrayButton>
          <TrayButton $width={22} aria-label="Volume"><SpeakerIcon /></TrayButton>
          <Clock>1:19 PM<br />12/31/2014</Clock>
          <ShowDesktop aria-label="Show desktop" />
        </Tray>
      </TaskBar>
    </Desktop>
  );
}
